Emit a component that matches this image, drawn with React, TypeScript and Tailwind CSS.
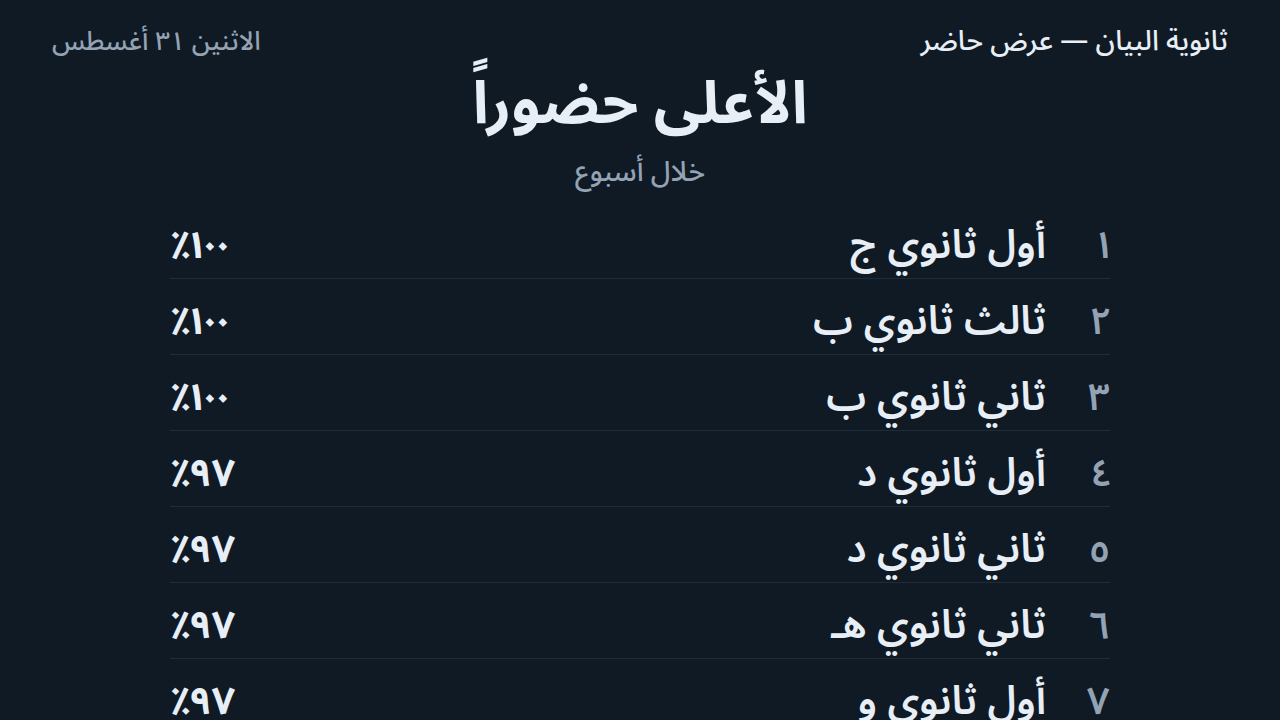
const rows = [
  { n: "١", name: "أول ثانوي ج", pct: "١٠٠٪" },
  { n: "٢", name: "ثالث ثانوي ب", pct: "١٠٠٪" },
  { n: "٣", name: "ثاني ثانوي ب", pct: "١٠٠٪" },
  { n: "٤", name: "أول ثانوي د", pct: "٩٧٪" },
  { n: "٥", name: "ثاني ثانوي د", pct: "٩٧٪" },
  { n: "٦", name: "ثاني ثانوي هـ", pct: "٩٧٪" },
  { n: "٧", name: "أول ثانوي و", pct: "٩٧٪" },
];

export default function App() {
  return (
    <div
      dir="rtl"
      className="w-[1280px] h-[720px] overflow-hidden bg-[#0f1a25] text-[#e8eef5]"
      style={{ fontFamily: '"Noto Sans Arabic", "Noto Sans Arabic UI", "Noto Sans", sans-serif' }}
    >
      <header className="flex justify-between items-center px-[52px] pt-[24px] h-[60px]">
        <p className="text-[28px] font-medium leading-[36px]">ثانوية البيان — عرض حاضر</p>
        <p className="text-[26px] font-medium leading-[36px] text-[#94a3b4]">الاثنين ٣١ أغسطس</p>
      </header>
      <div className="flex flex-col items-center">
        <h1 className="text-[59px] font-bold leading-[90px]">الأعلى حضوراً</h1>
        <p className="text-[28px] font-medium text-[#94a3b4] leading-[40px] mt-[3px]">خلال أسبوع</p>
      </div>
      <ul className="mx-[170px] mt-[10px]">
        {rows.map((r) => (
          <li
            key={r.n}
            className="flex items-center h-[76px] pt-[10px] border-b border-[#1f2b37]"
          >
            <span className="w-[40px] text-[38px] font-semibold leading-[56px] text-[#94a3b4] text-right proportional-nums">{r.n}</span>
            <span className="mr-[24px] flex-1 text-[40px] font-semibold leading-[56px]">{r.name}</span>
            <span className="text-[38px] font-bold leading-[56px] proportional-nums">{r.pct}</span>
          </li>
        ))}
      </ul>
    </div>
  );
}
